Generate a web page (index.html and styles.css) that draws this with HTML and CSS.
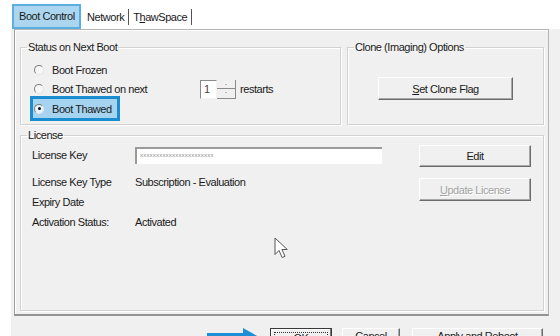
FILE: index.html
```html
<!DOCTYPE html>
<html lang="en">
<head>
  <meta charset="UTF-8">
  <title>Boot Control</title>
  <link rel="stylesheet" href="styles.css">
</head>
<body>
  <div class="dialog">
    <!-- Tab strip -->
    <div class="tabs">
      <span class="tab active">Boot Control</span>
      <span class="tab">Network</span>
      <span class="tab">T<u>h</u>awSpace</span>
    </div>

    <div class="sheet">
      <div class="page">
        <div class="top-row">
          <fieldset class="group status">
            <legend>Status on Next Boot</legend>
            <div class="opt"><span class="radio"></span>Boot Frozen</div>
            <div class="opt">
              <span class="radio"></span>
              <span class="opt-text">Boot Thawed on next</span>
              <span class="spin">
                <span class="spin-value">1</span>
                <span class="spin-btns">
                  <span class="spin-up"></span>
                  <span class="spin-down"></span>
                </span>
              </span>
              <span class="spin-label">restarts</span>
            </div>
            <div class="opt picked"><span class="radio on"></span>Boot Thawed</div>
          </fieldset>

          <fieldset class="group clone">
            <legend>Clone (Imaging) Options</legend>
            <button class="btn clone-btn"><u>S</u>et Clone Flag</button>
          </fieldset>
        </div>

        <fieldset class="group license">
          <legend>License</legend>
          <div class="license-body">
            <div class="license-info">
              <span class="key">License Key</span>
              <span class="field">xxxxxxxxxxxxxxxxxxxxxxx</span>
              <span class="key">License Key Type</span>
              <span class="val">Subscription - Evaluation</span>
              <span class="key">Expiry Date</span>
              <span class="val"></span>
              <span class="key">Activation Status:</span>
              <span class="val">Activated</span>
            </div>
            <div class="license-btns">
              <button class="btn">Edit</button>
              <button class="btn disabled"><u>U</u>pdate License</button>
            </div>
          </div>
        </fieldset>
      </div>

      <!-- Dialog buttons -->
      <div class="footer">
        <button class="btn default"><span class="focus">OK</span></button>
        <button class="btn cancel">Cancel</button>
        <button class="btn apply">Apply and Reboot</button>
      </div>
    </div>

    <svg class="cursor" width="15" height="22" viewBox="0 0 15 22">
      <path d="M1 1 L1 17.5 L5 13.5 L8.2 20.5 L11 19.3 L7.9 12.5 L13.3 12.5 Z" fill="#fff" stroke="#555" stroke-width="1" stroke-linejoin="round"/>
    </svg>
    <svg class="pointer" width="56" height="22" viewBox="0 0 56 22">
      <polygon points="0,7 36,7 36,2 52,11 36,20 36,15 0,15" fill="#1e8fd6"/>
    </svg>
  </div>
</body>
</html>
```

FILE: styles.css
```css
body {
  margin: 0;
  background: #fff;
  font-family: "Liberation Sans", Arial, sans-serif;
  font-size: 11px;
  letter-spacing: -0.45px;
  color: #1a1a1a;
  overflow: hidden;
}
.dialog {
  margin-left: 11px;
  padding-top: 4px;
  height: 332px;
}
.tabs {
  display: flex;
  align-items: center;
  height: 25px;
  padding-left: 1px;
}
.tab {
  line-height: 16px;
  padding: 0 4px 0 4px;
  border-right: 1px solid #555;
}
.tab.active {
  box-sizing: border-box;
  width: 69px;
  height: 25px;
  line-height: 21px;
  padding: 0 0 0 5px;
  margin-right: 2px;
  background: #acd6ef;
  border: 2px solid #5daee0;
}
.tab u {
  text-decoration-thickness: 1px;
}
.sheet {
  background: #f0f0f0;
  height: 307px;
}
.page {
  margin-left: 3px;
  width: 535px;
  box-sizing: border-box;
  height: 287px;
  padding: 11px 4px 1px 5px;
  border: 1px solid #b4b4b4;
  border-left-color: #a0a0a0;
  border-bottom: 2px solid #929292;
  box-shadow: inset 1px 1px 0 #fff;
}
.top-row {
  display: flex;
  gap: 6px;
  height: 84px;
}
.group {
  margin: 0;
  padding: 0;
  min-width: 0;
  border: 1px solid #d2d2d2;
  box-shadow: 1px 1px 0 #fff, inset 1px 1px 0 #fff;
}
.group legend {
  margin-left: 6px;
  padding: 0 1px;
  line-height: 13px;
}
.status {
  width: 321px;
  box-sizing: border-box;
  padding-top: 7px;
}
.clone {
  flex: 1;
  display: flex;
  flex-direction: column;
  align-items: center;
}
.opt {
  display: flex;
  align-items: center;
  height: 18px;
  margin: 0 0 1px 13px;
}
.radio {
  box-sizing: border-box;
  width: 10px;
  height: 10px;
  margin-right: 8px;
  border-radius: 50%;
  border: 1px solid;
  border-color: #7a7a7a #e4e4e4 #e4e4e4 #7a7a7a;
  background: #f7f7f7;
  display: flex;
  align-items: center;
  justify-content: center;
}
.radio.on::after {
  content: "";
  width: 3px;
  height: 3px;
  border-radius: 50%;
  background: #111;
}
.opt.picked {
  width: fit-content;
  box-sizing: border-box;
  height: 25px;
  margin: -3px 0 0 9px;
  padding: 0 5px 0 1px;
  background: #a6d3ef;
  border: 3px solid #1a8dd0;
}
.opt.picked .radio {
  background: #e8f4fb;
}
.opt-text {
  width: 148px;
}
.spin {
  display: flex;
  height: 19px;
}
.spin-value {
  box-sizing: border-box;
  width: 17px;
  height: 19px;
  padding-left: 3px;
  line-height: 17px;
  background: #fff;
  border: 1px solid;
  border-color: #8a8a8a #f4f4f4 #f4f4f4 #8a8a8a;
  color: #444;
}
.spin-btns {
  display: flex;
  flex-direction: column;
  width: 19px;
}
.spin-up, .spin-down {
  flex: 1;
  border-right: 1px solid #8a8a8a;
  border-bottom: 1px solid #8a8a8a;
  display: flex;
  align-items: center;
  justify-content: center;
}
.spin-up::after {
  content: "";
  border: 1.5px solid transparent;
  border-bottom-color: #888;
}
.spin-down::after {
  content: "";
  border: 1.5px solid transparent;
  border-top-color: #888;
}
.spin-label {
  margin-left: 4px;
}
.btn {
  box-sizing: border-box;
  font: inherit;
  letter-spacing: inherit;
  color: #1a1a1a;
  background: #f0f0f0;
  border: 1px solid;
  border-color: #fff #6b6b6b #6b6b6b #fff;
  box-shadow: inset -1px -1px 0 #a8a8a8;
  padding: 0;
}
.btn u {
  text-decoration-thickness: 1px;
}
.clone-btn {
  width: 135px;
  height: 23px;
  margin-top: 23px;
}
.license {
  height: 182px;
  margin-top: 4px;
  box-sizing: border-box;
  padding-top: 3px;
}
.license-body {
  display: flex;
  padding: 0 12px 0 11px;
}
.license-info {
  display: grid;
  grid-template-columns: 103px 247px;
  grid-template-rows: 17px 28px 20px 20px;
  align-items: end;
  margin-top: 2px;
  line-height: 20px;
}
.license-info .key:first-child {
  line-height: 17px;
}
.field {
  box-sizing: border-box;
  height: 17px;
  padding-left: 3px;
  background: #fff;
  border-top: 2px solid #9a9a9a;
  border-left: 2px solid #9a9a9a;
  font-size: 6px;
  letter-spacing: 0.2px;
  line-height: 12px;
  color: #8c8c8c;
}
.license-btns {
  margin-left: auto;
  display: flex;
  flex-direction: column;
  gap: 11px;
}
.license-btns .btn {
  width: 112px;
  height: 22px;
}
.btn.disabled {
  height: 23px;
  color: #a3a3a3;
  text-shadow: 1px 1px 0 #fff;
}
.footer {
  display: flex;
  justify-content: flex-end;
  gap: 10px;
  padding: 12px 17px 0 0;
}
.footer .btn {
  height: 23px;
  padding-bottom: 7px;
}
.btn.default {
  width: 62px;
  border: 1px solid #3a3a3a;
  padding: 3px;
  box-shadow: inset -1px -1px 0 #777, inset 1px 1px 0 #fff;
}
.focus {
  display: block;
  height: 15px;
  line-height: 10px;
  border: 1px dotted #333;
}
.cancel {
  width: 58px;
}
.apply {
  width: 131px;
  margin-left: 2px;
}
.cursor {
  position: absolute;
  left: 274px;
  top: 237px;
}
.pointer {
  position: absolute;
  left: 207px;
  top: 326px;
}
```
